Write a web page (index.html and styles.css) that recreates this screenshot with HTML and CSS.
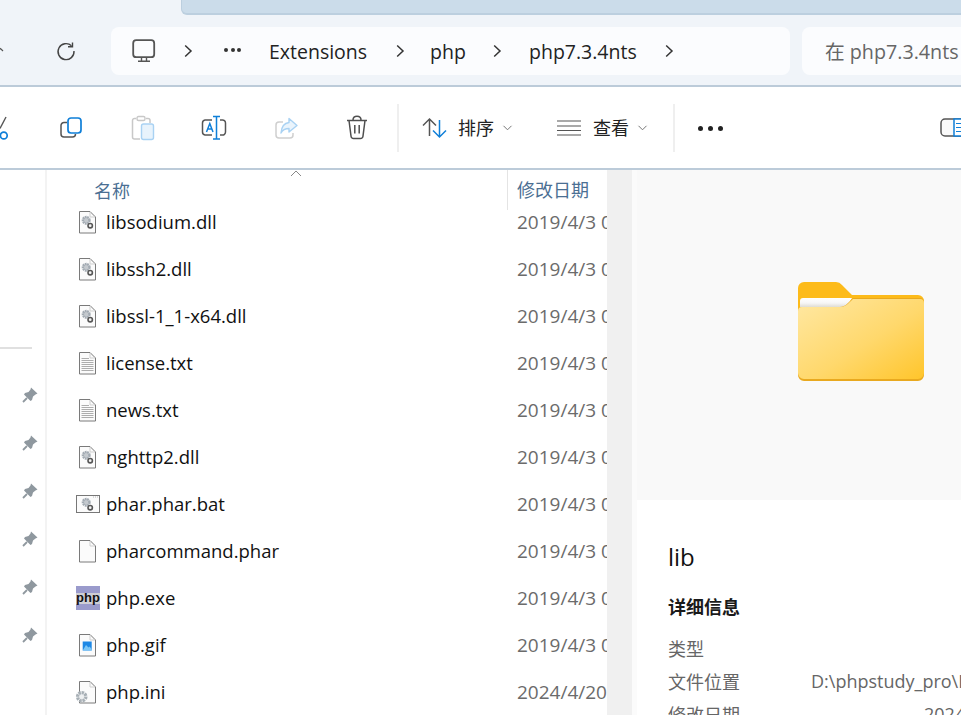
FILE: index.html
```html
<!DOCTYPE html>
<html lang="zh-CN">
<head>
<meta charset="utf-8">
<title>php7.3.4nts</title>
<link rel="stylesheet" href="styles.css">
</head>
<body>
<svg class="defs" width="0" height="0">
  <defs>
    <g id="doc"><path d="M3.500 1.500 H14 L19.500 7 V23 H3.500 Z" fill="#fbfbfb" stroke="#7a7a7a"/><path d="M14 2 V7 H19" fill="none" stroke="#cfcfcf"/></g>
    <g id="gears"><circle cx="10.200" cy="10.300" r="3.300" fill="#c4c9ce" stroke="#a3abb3" stroke-dasharray="1.700 .6" stroke-width="2.400"/><circle cx="14.200" cy="15.700" r="2.200" fill="#f4f4f4" stroke="#565656" stroke-width="1.600"/></g>
    <g id="lines"><path d="M5.500 7.500 H13 M5.500 9.500 H17.500 M5.500 11.500 H17.500 M5.500 13.500 H17.500 M5.500 15.500 H17.500 M5.500 17.500 H17.500 M5.500 19.500 H17.500" stroke="#adadad"/></g>
    <g id="pinshape"><path d="M9 .5 L15.500 6.500 L13.500 7.500 L11 9.500 L10 13 L8.500 14 L2 7.500 L3 6 L6.500 5 L8.500 2.500 Z" fill="#8f989f"/><path d="M5 11 L1 15" stroke="#8f989f" stroke-width="1.800"/></g>
    <path id="chevron" d="M1.200 1.500 L7 7 L1.200 12.500" fill="none" stroke="#333" stroke-width="1.500"/>
  </defs>
</svg>
<div class="window">
  <header class="topband">
    <div class="tabstrip"><div class="tab"></div></div>
    <div class="navrow">
      <svg class="up" width="6" height="6" viewBox="0 0 6 6"><path d="M0 4 L2.500 1.500 L5 4" fill="none" stroke="#555" stroke-width="1.200"/></svg>
      <svg class="refresh" width="22" height="22" viewBox="0 0 22 22"><path d="M16.500 5.800 A8 8 0 1 0 19 11" fill="none" stroke="#444" stroke-width="1.400"/><path d="M17.500 2.500 V6.800 H13" fill="none" stroke="#444" stroke-width="1.400"/></svg>
      <div class="address">
        <svg class="pc" width="24" height="24" viewBox="0 0 24 24"><rect x="1.200" y="1.200" width="21" height="17" rx="3" fill="none" stroke="#555" stroke-width="1.800"/><path d="M9.500 19 V21.500 M14.500 19 V21.500 M6 22.200 H18" stroke="#555" stroke-width="1.400" fill="none"/></svg>
        <svg class="chev chev-a" width="9" height="14" viewBox="0 0 9 14"><use href="#chevron"/></svg>
        <span class="dots3"><i></i><i></i><i></i></span>
        <span class="crumb c-ext">Extensions</span>
        <svg class="chev chev-b" width="9" height="14" viewBox="0 0 9 14"><use href="#chevron"/></svg>
        <span class="crumb c-php">php</span>
        <svg class="chev chev-c" width="9" height="14" viewBox="0 0 9 14"><use href="#chevron"/></svg>
        <span class="crumb c-ver">php7.3.4nts</span>
        <svg class="chev chev-d" width="9" height="14" viewBox="0 0 9 14"><use href="#chevron"/></svg>
      </div>
      <div class="search">在 php7.3.4nts</div>
    </div>
  </header>

  <div class="commandbar">
    <svg class="cmd cut" width="10" height="24" viewBox="0 0 10 24"><path d="M6 1 L0 12.500" stroke="#555" stroke-width="1.400" fill="none"/><circle cx="3.800" cy="19.500" r="3.400" fill="none" stroke="#0f7fd8" stroke-width="1.700"/></svg>
    <svg class="cmd copy" width="24" height="24" viewBox="0 0 24 24"><path d="M8 6.500 H5 A3 3 0 0 0 2 9.500 V18 A3 3 0 0 0 5 21 H13.500 A3 3 0 0 0 16.500 18" fill="none" stroke="#555" stroke-width="1.500"/><rect x="9" y="2" width="13" height="15" rx="3" fill="none" stroke="#0f7fd8" stroke-width="1.700"/></svg>
    <svg class="cmd paste" width="24" height="26" viewBox="0 0 24 26"><path d="M5 3.500 H3.500 A2 2 0 0 0 1.500 5.500 V22 A2 2 0 0 0 3.500 24 H9 M19 8 V5.500 A2 2 0 0 0 17 3.500 H15" fill="none" stroke="#c8c8c8" stroke-width="1.500"/><rect x="6" y="1.500" width="8" height="4" rx="1.500" fill="none" stroke="#c8c8c8" stroke-width="1.400"/><rect x="10.500" y="9" width="12" height="15.500" rx="2" fill="#e8f3fc" stroke="#a9d2f3" stroke-width="1.400"/></svg>
    <svg class="cmd rename" width="26" height="26" viewBox="0 0 26 26"><path d="M11 5 H4 A3 3 0 0 0 1.500 8 V17 A3 3 0 0 0 4 20 H11 M19 5 H21 A3 3 0 0 1 24.500 8 V17 A3 3 0 0 1 21 20 H19" fill="none" stroke="#555" stroke-width="1.500"/><path d="M12 1.500 H19 M15.500 1.500 V24 M12 24 H19" fill="none" stroke="#0f7fd8" stroke-width="1.500"/><path d="M5.500 17 L8.800 8.500 L12 17 M6.700 14 H11" fill="none" stroke="#0f7fd8" stroke-width="1.500"/></svg>
    <svg class="cmd share" width="24" height="24" viewBox="0 0 24 24"><path d="M9 6 H5 A3 3 0 0 0 2 9 V19 A3 3 0 0 0 5 22 H16 A3 3 0 0 0 19 19 V17" fill="none" stroke="#cfcfcf" stroke-width="1.500"/><path d="M15 2.500 L23 9.500 L15 16 V12.500 C11 12.500 8.500 14 7 17 C7.500 11 10.500 7 15 6.500 Z" fill="#eaf4fc" stroke="#a9d2f3" stroke-width="1.400" stroke-linejoin="round"/></svg>
    <svg class="cmd trash" width="22" height="25" viewBox="0 0 22 25"><path d="M1 5.500 H21 M7 5 C7 2.500 8.500 1.200 11 1.200 C13.500 1.200 15 2.500 15 5 M3 5.500 L5 21 A2.500 2.500 0 0 0 7.500 23.500 H14.500 A2.500 2.500 0 0 0 17 21 L19 5.500 M8.800 10 V18.500 M13.200 10 V18.500" fill="none" stroke="#4f4f4f" stroke-width="1.500"/></svg>
    <span class="vsep sep-a"></span>
    <svg class="cmd sorticon" width="25" height="20" viewBox="0 0 25 20"><path d="M1 7.500 L7.500 1 L14 7.500 M7.500 1 V18" fill="none" stroke="#555" stroke-width="1.500"/><path d="M11 12.500 L17.500 19 L24 12.500 M17.500 19 V2" fill="none" stroke="#0f7fd8" stroke-width="1.500"/></svg>
    <span class="cmdlabel l-sort">排序</span>
    <svg class="cmd caret caret-a" width="9" height="6" viewBox="0 0 9 6"><path d="M.5 .8 L4.500 4.800 L8.500 .8" fill="none" stroke="#777" stroke-width="1"/></svg>
    <svg class="cmd viewicon" width="24" height="16" viewBox="0 0 24 16"><path d="M0 1 H24 M0 6 H24 M0 10.500 H24 M0 15 H24" stroke="#555" stroke-width="1.200"/></svg>
    <span class="cmdlabel l-view">查看</span>
    <svg class="cmd caret caret-b" width="9" height="6" viewBox="0 0 9 6"><path d="M.5 .8 L4.500 4.800 L8.500 .8" fill="none" stroke="#777" stroke-width="1"/></svg>
    <span class="vsep sep-b"></span>
    <span class="more"><i></i><i></i><i></i></span>
    <svg class="cmd details" width="21" height="19" viewBox="0 0 21 19"><rect x="1" y="1" width="30" height="17" rx="4" fill="#fafafa" stroke="#555" stroke-width="1.500"/><rect x="14" y="1" width="8" height="17" fill="#fff" stroke="#0f7fd8" stroke-width="1.500"/><path d="M16 5.500 H21 M16 9.500 H21 M16 13.500 H21" stroke="#0f7fd8" stroke-width="1.200"/></svg>
  </div>

  <main class="body">
    <nav class="sidebar">
      <div class="side-rule"></div>
      <div class="pins">
        <svg class="pin" width="16" height="16" viewBox="0 0 16 16"><use href="#pinshape"/></svg>
        <svg class="pin" width="16" height="16" viewBox="0 0 16 16"><use href="#pinshape"/></svg>
        <svg class="pin" width="16" height="16" viewBox="0 0 16 16"><use href="#pinshape"/></svg>
        <svg class="pin" width="16" height="16" viewBox="0 0 16 16"><use href="#pinshape"/></svg>
        <svg class="pin" width="16" height="16" viewBox="0 0 16 16"><use href="#pinshape"/></svg>
        <svg class="pin" width="16" height="16" viewBox="0 0 16 16"><use href="#pinshape"/></svg>
      </div>
    </nav>
    <section class="files">
      <div class="colhead">
        <svg class="sortarrow" width="12" height="7" viewBox="0 0 12 7"><path d="M1 6 L6 1 L11 6" fill="none" stroke="#888" stroke-width="1"/></svg>
        <span class="h-name">名称</span>
        <span class="h-date">修改日期</span>
      </div>
      <ul class="rows">
        <li class="row"><span class="ficon"><svg width="24" height="24" viewBox="0 0 24 24"><use href="#doc"/><use href="#gears"/></svg></span><span class="fname">libsodium.dll</span><span class="fdate">2019/4/3 0:00</span></li>
        <li class="row"><span class="ficon"><svg width="24" height="24" viewBox="0 0 24 24"><use href="#doc"/><use href="#gears"/></svg></span><span class="fname">libssh2.dll</span><span class="fdate">2019/4/3 0:00</span></li>
        <li class="row"><span class="ficon"><svg width="24" height="24" viewBox="0 0 24 24"><use href="#doc"/><use href="#gears"/></svg></span><span class="fname">libssl-1_1-x64.dll</span><span class="fdate">2019/4/3 0:00</span></li>
        <li class="row"><span class="ficon"><svg width="24" height="24" viewBox="0 0 24 24"><use href="#doc"/><use href="#lines"/></svg></span><span class="fname">license.txt</span><span class="fdate">2019/4/3 0:00</span></li>
        <li class="row"><span class="ficon"><svg width="24" height="24" viewBox="0 0 24 24"><use href="#doc"/><use href="#lines"/></svg></span><span class="fname">news.txt</span><span class="fdate">2019/4/3 0:00</span></li>
        <li class="row"><span class="ficon"><svg width="24" height="24" viewBox="0 0 24 24"><use href="#doc"/><use href="#gears"/></svg></span><span class="fname">nghttp2.dll</span><span class="fdate">2019/4/3 0:00</span></li>
        <li class="row"><span class="ficon"><svg width="24" height="24" viewBox="0 0 24 24"><rect x=".5" y="3.500" width="23" height="17" fill="#fbfbfb" stroke="#777"/><path d="M17 5 H22" stroke="#bbb" stroke-dasharray="1 1"/><use href="#gears"/></svg></span><span class="fname">phar.phar.bat</span><span class="fdate">2019/4/3 0:00</span></li>
        <li class="row"><span class="ficon"><svg width="24" height="24" viewBox="0 0 24 24"><use href="#doc"/></svg></span><span class="fname">pharcommand.phar</span><span class="fdate">2019/4/3 0:00</span></li>
        <li class="row"><span class="ficon"><svg width="24" height="24" viewBox="0 0 24 24"><rect width="24" height="24" fill="#9a9bcc"/><rect y="7" width="24" height="11" fill="#cfcfd6"/><text class="phptext" x="12" y="16" text-anchor="middle">php</text></svg></span><span class="fname">php.exe</span><span class="fdate">2019/4/3 0:00</span></li>
        <li class="row"><span class="ficon"><svg width="24" height="24" viewBox="0 0 24 24"><use href="#doc"/><rect x="6.700" y="8.500" width="9" height="9" fill="#1e88e5"/><path d="M6.700 17.500 L10 12 L12.500 14.500 L13.500 13.500 L15.700 16 V17.500 Z" fill="#7cc7f7"/></svg></span><span class="fname">php.gif</span><span class="fdate">2019/4/3 0:00</span></li>
        <li class="row"><span class="ficon"><svg width="24" height="24" viewBox="0 0 24 24"><use href="#doc"/><circle cx="5.700" cy="16.700" r="4.200" fill="#e6e8ea" stroke="#a8b0b6" stroke-width="3.200" stroke-dasharray="2.400 .8"/><circle cx="5.700" cy="16.700" r="2" fill="#eef0f1"/></svg></span><span class="fname">php.ini</span><span class="fdate">2024/4/20 10:00</span></li>
      </ul>
    </section>
    <div class="scroll"></div>
    <aside class="pane">
      <div class="preview">
        <svg class="folder" width="128" height="102" viewBox="0 0 128 102">
          <defs>
            <linearGradient id="fg" x1="0" y1="0" x2="1" y2="1"><stop offset="0" stop-color="#ffe8a3"/><stop offset=".55" stop-color="#ffd86c"/><stop offset="1" stop-color="#ffc52b"/></linearGradient>
            <linearGradient id="sheet" x1="0" y1="0" x2="0" y2="1"><stop offset="0" stop-color="#ffffff"/><stop offset=".5" stop-color="#f6f6f6"/><stop offset="1" stop-color="#d9d6cc"/></linearGradient>
          </defs>
          <path d="M0 8 A6 6 0 0 1 6 2 H38 A8 8 0 0 1 44 5 L54 15 H120 A6 6 0 0 1 126 21 V60 H0 Z" fill="#fdbb1a"/>
          <path d="M2 28 V21 A3 3 0 0 1 5 18 H54 L48 28 Z" fill="url(#sheet)"/>
          <path d="M0 31 A4 4 0 0 1 4 27 H42 C47 27 50 23 55 18 H122 A4 4 0 0 1 126 22 V95 A6 6 0 0 1 120 101 H6 A6 6 0 0 1 0 95 Z" fill="#e9a91f"/>
          <path d="M0 31 A4 4 0 0 1 4 27 H42 C47 27 50 24 55 19 H122 A4 4 0 0 1 126 23 V93 A6 6 0 0 1 120 99 H6 A6 6 0 0 1 0 93 Z" fill="url(#fg)"/>
        </svg>
      </div>
      <div class="info">
        <h2 class="foldername">lib</h2>
        <h3 class="infohead">详细信息</h3>
        <dl class="props">
          <div class="prop"><dt>类型</dt><dd></dd></div>
          <div class="prop"><dt>文件位置</dt><dd class="loc">D:\phpstudy_pro\Extensions</dd></div>
          <div class="prop"><dt>修改日期</dt><dd class="mod">2024/4/20 10:00</dd></div>
        </dl>
      </div>
    </aside>
  </main>
</div>
</body>
</html>
```
FILE: styles.css
```css
* { box-sizing: border-box; }
html, body { margin: 0; padding: 0; height: 100%; overflow: hidden; background: #fff; }
.defs { position: absolute; }
.window { width: 961px; height: 715px; display: flex; flex-direction: column; overflow: hidden; font-family: "Open Sans", "Noto Sans CJK SC", sans-serif; color: #1a1a1a; }

.topband { height: 87px; background: #f0f4f9; border-bottom: 2px solid #bccbd9; flex: none; }
.tabstrip { height: 27px; padding-left: 181px; }
.tab { height: 15px; background: #cbdcea; border-bottom: 2px solid #bccfdf; border-left: 1px solid #bccfdf; border-bottom-left-radius: 6px; }
.navrow { display: flex; align-items: center; height: 48px; position: relative; }
.up { position: absolute; left: -2px; top: 20px; }
.refresh { margin-left: 55px; flex: none; }
.address { margin-left: 34px; width: 679px; height: 48px; background: #fbfcfe; border-radius: 8px; display: flex; align-items: center; flex: none; }
.pc { margin-left: 21px; flex: none; }
.chev { flex: none; }
.chev-a { margin-left: 28px; }
.dots3 { margin-left: 31px; width: 17px; flex: none; display: flex; gap: 2.500px; margin-bottom: 3px; }
.dots3 i { width: 4px; height: 4px; border-radius: 50%; background: #333; display: block; }
.crumb { font-size: 19.500px; line-height: 28px; color: #222; white-space: nowrap; flex: none; padding-top: 2px; }
.c-ext { margin-left: 28px; width: 97px; }
.chev-b { margin-left: 30px; }
.c-php { margin-left: 25px; width: 36px; }
.chev-c { margin-left: 27px; }
.c-ver { margin-left: 27px; width: 108px; }
.chev-d { margin-left: 28px; }
.search { margin-left: 12px; height: 48px; flex: 1; background: #fbfcfe; border-radius: 8px 0 0 8px; padding-left: 23px; font-size: 19.700px; line-height: 50px; color: #666; white-space: nowrap; overflow: hidden; }

.commandbar { height: 83px; flex: none; background: #fff; border-bottom: 2px solid #bccbd9; display: flex; align-items: center; position: relative; overflow: hidden; }
.cmd { flex: none; overflow: visible; }
.copy { margin-left: 49px; }
.paste { margin-left: 48px; }
.rename { margin-left: 46px; }
.share { margin-left: 47px; }
.trash { margin-left: 48px; }
.vsep { width: 2px; height: 48px; background: #efefef; flex: none; }
.sep-a { margin-left: 29px; }
.sorticon { margin-left: 23px; }
.cmdlabel { font-size: 18px; line-height: 26px; color: #222; white-space: nowrap; }
.l-sort { margin-left: 11px; }
.caret-a { margin-left: 9px; }
.viewicon { margin-left: 45px; }
.l-view { margin-left: 12px; }
.caret-b { margin-left: 9px; }
.sep-b { margin-left: 26px; }
.more { margin-left: 23px; margin-top: 2px; display: flex; gap: 5px; }
.more i { width: 5px; height: 5px; border-radius: 50%; background: #222; display: block; }
.details { margin-left: 217px; }

.body { flex: 1; display: flex; min-height: 0; }
.sidebar { width: 47px; flex: none; background: #fff; border-right: 2px solid #f3f3f3; padding-top: 177px; }
.side-rule { width: 32px; height: 2px; background: #e0e0e0; }
.pins { margin-top: 38px; display: flex; flex-direction: column; gap: 32px; padding-left: 22px; }
.pin { display: block; }

.files { width: 560px; flex: none; background: #fff; position: relative; overflow: hidden; }
.colhead { height: 40px; position: relative; display: flex; align-items: center; font-size: 18px; color: #4b6f93; }
.sortarrow { position: absolute; left: 243px; top: 0; }
.h-name { margin-left: 47px; width: 413px; }
.h-date { height: 40px; border-left: 1px solid #e4e4e4; padding-left: 9px; line-height: 40px; white-space: nowrap; }
.rows { list-style: none; margin: -12px 0 0 0; padding: 0; }
.row { height: 47px; display: flex; align-items: center; position: relative; font-size: 18.500px; white-space: nowrap; }
.ficon { width: 24px; height: 24px; margin-left: 29px; flex: none; display: block; }
.ficon svg { display: block; overflow: visible; }
.phptext { font-family: "Liberation Sans", sans-serif; font-size: 13px; font-weight: 700; fill: #111; }
.fname { margin-left: 6px; width: 411px; flex: none; color: #111; }
.fdate { color: #6b6b6b; font-size: 19px; }

.scroll { width: 30px; flex: none; background: #f0f0f0; border-right: 5px solid #fbfbfb; }
.pane { flex: 1; min-width: 0; background: #fff; overflow: hidden; }
.preview { height: 330px; background: #f9f9f9; position: relative; display: flex; }
.folder { margin: 110px 0 0 161px; flex: none; }
.info { padding-left: 31px; white-space: nowrap; }
.foldername { margin: 41px 0 0; font-size: 24px; line-height: 32px; font-weight: 400; color: #111; }
.infohead { margin: 21px 0 0; font-size: 18px; line-height: 26px; font-weight: 700; color: #1a1a1a; }
.props { margin: 11px 0 0; }
.prop { display: flex; height: 33px; align-items: center; font-size: 18px; color: #666; }
.prop dt { width: 143px; flex: none; }
.prop dd { margin: 0; font-size: 18px; }
.mod { margin-left: 113px !important; }
```
